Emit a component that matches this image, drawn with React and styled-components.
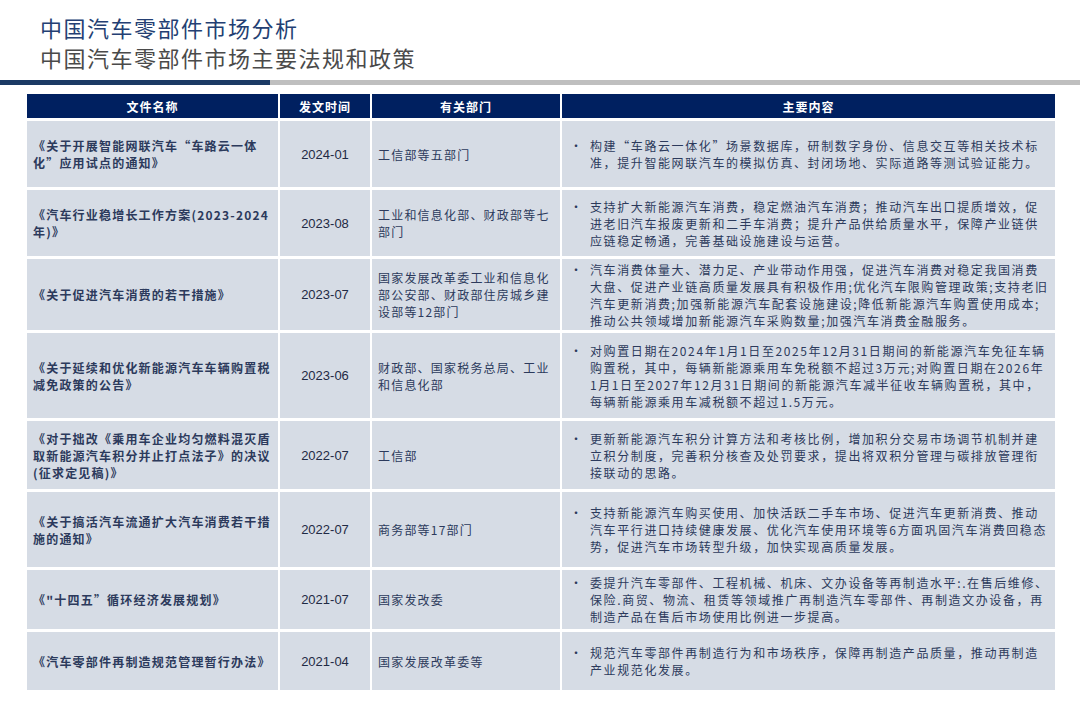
import React from 'react';
import styled, { createGlobalStyle } from 'styled-components';

const Global = createGlobalStyle`
  body { margin: 0; background: #fff; font-family: "Noto Sans CJK SC", "Liberation Sans", sans-serif; }
`;

const Page = styled.div`
  width: 1080px;
  height: 702px;
  overflow: hidden;
`;

const Titles = styled.div`
  padding: 12px 0 0 40px;
  height: 66px;
  box-sizing: border-box;
`;

const Title = styled.div`
  font-size: 22px;
  line-height: 30px;
  color: #243f73;
  letter-spacing: 1.5px;
`;

const Subtitle = styled.div`
  font-size: 22px;
  line-height: 30px;
  color: #4a4a4a;
  letter-spacing: 1.5px;
`;

const Rule = styled.div`
  display: flex;
  height: 5px;
  margin-top: 14px;
`;

const RuleDark = styled.div`
  width: 270px;
  background: #1b3a64;
`;

const RuleLight = styled.div`
  flex: 1;
  background: #bfbfbf;
`;

const Table = styled.div`
  display: grid;
  grid-template-columns: 251px 90px 188px 493px;
  grid-template-rows: 24px 66px 66px 71px 85px 68px 75px 59px 58px;
  gap: 3px 2px;
  margin: 9px 0 0 27px;
  width: 1028px;
`;

const Head = styled.div`
  background: #002060;
  color: #fff;
  font-size: 12px;
  font-weight: 700;
  display: flex;
  align-items: center;
  justify-content: center;
  letter-spacing: 1px;
`;

const Cell = styled.div`
  background: #d6dce5;
  color: ${p => (p.$date ? '#1f2a44' : '#2c3a5c')};
  font-size: ${p => (p.$date ? '13px' : '12px')};
  font-weight: ${p => (p.$bold ? 700 : 400)};
  line-height: 17px;
  letter-spacing: ${p => (p.$date ? '0' : p.$content ? '1.6px' : '1.2px')};
  font-family: ${p => (p.$date ? '"Liberation Sans", sans-serif' : 'inherit')};
  display: flex;
  align-items: center;
  justify-content: ${p => (p.$date ? 'center' : 'flex-start')};
  padding: ${p => (p.$content ? '0 4px 0 8px' : '0 6px')};
  box-sizing: border-box;
`;

const BulletRow = styled.div`
  display: flex;
  align-items: flex-start;
`;

const Bullet = styled.span`
  flex: none;
  width: 20px;
`;

const rows = [
  ['《关于开展智能网联汽车“车路云一体化”应用试点的通知》', '2024-01', '工信部等五部门', '构建“车路云一体化”场景数据库，研制数字身份、信息交互等相关技术标准，提升智能网联汽车的模拟仿真、封闭场地、实际道路等测试验证能力。'],
  ['《汽车行业稳增长工作方案(2023-2024年)》', '2023-08', '工业和信息化部、财政部等七部门', '支持扩大新能源汽车消费，稳定燃油汽车消费；推动汽车出口提质增效，促进老旧汽车报废更新和二手车消费；提升产品供给质量水平，保障产业链供应链稳定畅通，完善基础设施建设与运营。'],
  ['《关于促进汽车消费的若干措施》', '2023-07', '国家发展改革委工业和信息化部公安部、财政部住房城乡建设部等12部门', '汽车消费体量大、潜力足、产业带动作用强，促进汽车消费对稳定我国消费大盘、促进产业链高质量发展具有积极作用;优化汽车限购管理政策;支持老旧汽车更新消费;加强新能源汽车配套设施建设;降低新能源汽车购置使用成本;推动公共领域增加新能源汽车采购数量;加强汽车消费金融服务。'],
  ['《关于延续和优化新能源汽车车辆购置税减免政策的公告》', '2023-06', '财政部、国家税务总局、工业和信息化部', '对购置日期在2024年1月1日至2025年12月31日期间的新能源汽车免征车辆购置税，其中，每辆新能源乘用车免税额不超过3万元;对购置日期在2026年1月1日至2027年12月31日期间的新能源汽车减半征收车辆购置税，其中，每辆新能源乘用车减税额不超过1.5万元。'],
  ['《对于拙改《乘用车企业均匀燃料混灭盾取新能源汽车积分并止打点法子》的决议(征求定见稿)》', '2022-07', '工信部', '更新新能源汽车积分计算方法和考核比例，增加积分交易市场调节机制并建立积分制度，完善积分核查及处罚要求，提出将双积分管理与碳排放管理衔接联动的思路。'],
  ['《关于搞活汽车流通扩大汽车消费若干措施的通知》', '2022-07', '商务部等17部门', '支持新能源汽车购买使用、加快活跃二手车市场、促进汽车更新消费、推动汽车平行进口持续健康发展、优化汽车使用环境等6方面巩固汽车消费回稳态势，促进汽车市场转型升级，加快实现高质量发展。'],
  ['《"十四五”循环经济发展规划》', '2021-07', '国家发改委', '委提升汽车零部件、工程机械、机床、文办设备等再制造水平:.在售后维修、保险.商贸、物流、租赁等领域推广再制造汽车零部件、再制造文办设备，再制造产品在售后市场使用比例进一步提高。'],
  ['《汽车零部件再制造规范管理暂行办法》', '2021-04', '国家发展改革委等', '规范汽车零部件再制造行为和市场秩序，保障再制造产品质量，推动再制造产业规范化发展。'],
];

export default function App() {
  return (
    <Page>
      <Global />
      <Titles>
        <Title>中国汽车零部件市场分析</Title>
        <Subtitle>中国汽车零部件市场主要法规和政策</Subtitle>
      </Titles>
      <Rule>
        <RuleDark />
        <RuleLight />
      </Rule>
      <Table>
        <Head>文件名称</Head>
        <Head>发文时间</Head>
        <Head>有关部门</Head>
        <Head>主要内容</Head>
        {rows.map(([name, date, dept, content]) => (
          <React.Fragment key={name}>
            <Cell $bold>{name}</Cell>
            <Cell $date>{date}</Cell>
            <Cell>{dept}</Cell>
            <Cell $content>
              <BulletRow>
                <Bullet>•</Bullet>
                <span>{content}</span>
              </BulletRow>
            </Cell>
          </React.Fragment>
        ))}
      </Table>
    </Page>
  );
}
